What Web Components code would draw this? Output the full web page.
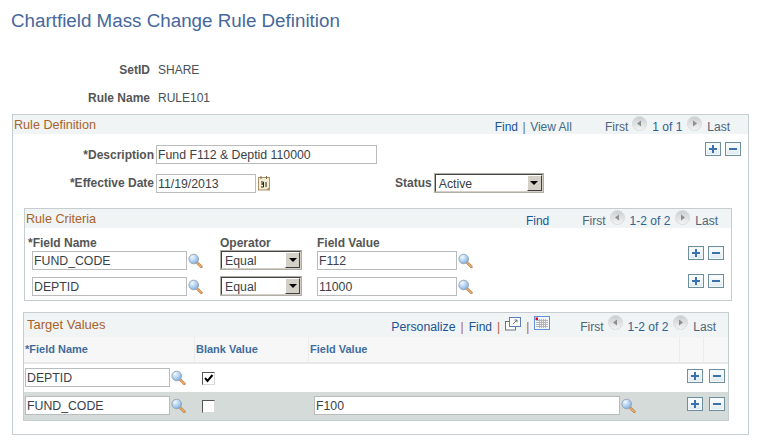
<!DOCTYPE html>
<html><head><meta charset="utf-8"><title>Chartfield Mass Change Rule Definition</title>
<style>
html,body{margin:0;padding:0;background:#fff;font:12px "Liberation Sans",Arial,sans-serif;color:#3d3d3d;}
</style></head><body>
<template id="g-lookup"><svg width="15" height="15" viewBox="0 0 15 15"><defs><radialGradient id="l" cx=".35" cy=".3" r=".8"><stop offset="0" stop-color="#f2f8fd"/><stop offset=".6" stop-color="#a9cbee"/><stop offset="1" stop-color="#6f9fd6"/></radialGradient></defs><path d="M9 9.500 L13.300 13.700" stroke="#b08a60" stroke-width="2.800" stroke-linecap="round"/><path d="M9.400 10 L13.200 13.600" stroke="#f2a860" stroke-width="1.500" stroke-linecap="round"/><circle cx="5.700" cy="6" r="4.800" fill="url(#l)" stroke="#9aa9b8" stroke-width="1"/></svg></template>

<x-page>
  <x-meta label="SetID">SHARE</x-meta>
  <x-meta label="Rule Name">RULE101</x-meta>
  <x-panel title="Rule Definition" class="outer" style="--hr:18px">
    <x-nav slot="tools" find="view" range="1 of 1" gap="33"></x-nav>
    <x-rule-def></x-rule-def>
  </x-panel>
</x-page>

<script>
const def=(n,html,init)=>customElements.define(n,class extends HTMLElement{
  constructor(){super();this.attachShadow({mode:'open'}).innerHTML=typeof html==='function'?html(this):html;}
  connectedCallback(){ if(typeof html==='function'&&!this._d){this._d=1;this.shadowRoot.innerHTML=html(this);} if(init)init(this);}
});
const lookup=()=>document.getElementById('g-lookup').innerHTML;

def('x-lookup',()=>`<style>:host{display:inline-flex;width:15px;height:15px}svg{display:block}</style>${lookup()}`);

def('x-input',`<style>:host{display:block;box-sizing:border-box;height:19px;border:1px solid #b8bcbc;background:#fff;padding:0 1px;font:12.3px/18px "Liberation Sans",Arial,sans-serif;color:#3a3f48;white-space:nowrap;overflow:hidden}</style><slot></slot>`);

def('x-select',`<style>:host{display:flex;box-sizing:border-box;height:20px;border:2px solid;border-color:#444 #d4d0c8 #d4d0c8 #444;background:#fff;padding-left:3px;align-items:center;justify-content:space-between;font:12.3px "Liberation Sans",Arial,sans-serif;color:#3a3f48;outline:1px solid #b0aea6;outline-offset:-1px}
.t{padding-top:2px}
.b{width:15px;height:16px;box-sizing:border-box;background:#d4d0c8;border:1px solid;border-color:#fff #404040 #404040 #fff;display:flex;align-items:center;justify-content:center;flex:none}
.b i{width:0;height:0;border:4px solid transparent;border-top:4px solid #000;border-bottom:0}</style><span class="t"><slot></slot></span><span class="b"><i></i></span>`);

def('x-addrem',`<style>:host{display:flex;gap:var(--ag,4px)}
b{display:block;width:16px;height:14px;box-sizing:border-box;border:1px solid #6f8f9f;box-shadow:inset 0 0 0 1px #f2f7fa;background:linear-gradient(#fff,#dfe9ef);position:relative}
b::before{content:"";position:absolute;left:3px;right:3px;top:5px;height:2px;background:#3a72ae}
b.p::after{content:"";position:absolute;top:2px;bottom:2px;left:6px;width:2px;background:#3a72ae}</style><b class="p"></b><b></b>`);

def('x-round',el=>{const d=el.getAttribute('dir')==='r';return `<style>:host{display:inline-block;width:15px;height:15px;position:relative;top:-4px}svg{display:block}</style><svg width="15" height="15" viewBox="0 0 15 15"><defs><linearGradient id="g" x1="0" y1="0" x2="0" y2="1"><stop offset="0" stop-color="#c9cdcd"/><stop offset="1" stop-color="#f5f6f6"/></linearGradient></defs><circle cx="7.500" cy="7.500" r="7" fill="url(#g)" stroke="#d9dcdc"/><path d="${d?'M6 4.500 L10 7.500 L6 10.500Z':'M9 4.500 L5 7.500 L9 10.500Z'}" fill="#8a8f8f"/></svg>`});

def('x-nav',el=>{
 const f=el.getAttribute('find');const r=el.getAttribute('range');
 let left='';
 if(f==='view')left=`<a>Find</a> <span class="s">|</span> <span class="v">View All</span>`;
 if(f==='find')left=`<a>Find</a>`;
 if(f==='full')left=`<a style="font-size:12.300px">Personalize</a> <span class="r">|</span> <a>Find</a> <span class="r2">|</span> <svg class="ic" width="16" height="14" viewBox="0 0 16 14"><rect x=".5" y="4.500" width="10" height="8.500" fill="#fff" stroke="#6f7478"/><rect x="4.500" y=".5" width="11" height="9" fill="#fff" stroke="#5a7fb8"/><path d="M8 7 L12 3 M9.500 3 H12 V5.500" fill="none" stroke="#6f7478"/></svg> <span class="r">|</span> <svg class="ic g2" width="16" height="14" viewBox="0 0 16 14"><rect x=".5" y=".5" width="15" height="13" fill="#f4f6f9" stroke="#5f90d8"/><path d="M2 4.500h12M2 6.500h12M2 8.500h12M2 10.500h12M5.500 3v9M7.500 3v9M9.500 3v9M11.500 3v9" stroke="#b4b4b4" stroke-width="1"/><rect x="1.500" y="1.500" width="2.500" height="2.500" fill="#e8001c"/></svg>`;
 return `<style>:host{display:flex;align-items:center;padding-top:var(--nt,5px);font:12px "Liberation Sans",Arial,sans-serif;color:#4e6478;white-space:nowrap}
 a{color:#1a5596}.s{color:#5a6f80}.v{color:#3f6a8c}.r,.r2{color:#b0603a}.ic{position:relative;top:-3px}.g2{top:-4px}
 .left{display:flex;align-items:center;gap:${f==='full'?5:4.5}px}.m{color:#2f6295;margin:0 5px}.first{margin-left:${el.getAttribute('gap')||32}px;margin-right:4px}.last{margin-left:5px}</style>
 <span class="left">${left}</span><span class="first">First</span><x-round></x-round><span class="m">${r}</span><x-round dir="r"></x-round><span class="last">Last</span>`;
});

def('x-panel',el=>`<style>:host{display:block;box-sizing:border-box;border:1px solid #c5cdd0;background:#fff}
 header{display:flex;align-items:center;justify-content:space-between;height:var(--hh,19px);background:#f0f4f4;padding:0 var(--hr,17px) 0 var(--hl,1px);font:var(--hf,12.6px) "Liberation Sans",Arial,sans-serif;color:#a9622a}
 .tt{padding-bottom:var(--hb,0)}</style>
 <header><span class="tt">${el.getAttribute('title')}</span><slot name="tools"></slot></header><slot></slot>`);

def('x-meta',el=>`<style>:host{display:flex;height:28px;align-items:center;font:12px "Liberation Sans",Arial,sans-serif}
 b{width:150px;text-align:right;color:#555;margin-right:8px}span{color:#4a4f58}</style><b>${el.getAttribute('label')}</b><span><slot></slot></span>`);

def('x-page',`<style>:host{display:block;width:762px}
 h1{margin:0;height:56px;box-sizing:border-box;padding:10px 0 0 11px;font:18.8px/21px "Liberation Sans",Arial,sans-serif;color:#46689a}
 ::slotted(x-panel){margin:2px 13px 0 12px}</style><h1>Chartfield Mass Change Rule Definition</h1><slot></slot>`);

def('x-criteria',()=>`<style>:host{display:block;padding:8px 7px 4px 7px;font:12px "Liberation Sans",Arial,sans-serif}
 .grid{display:grid;grid-template-columns:155px 16px 100px 14px 140px 16px 1fr;row-gap:6px;align-items:center}
 .h{font-weight:bold;color:#555;height:14px;line-height:14px;margin-bottom:-6px}
 x-lookup{margin-left:1px}
 x-select{margin-left:17px;width:82px}
 x-addrem{justify-self:end;position:relative;top:-7px}
 x-addrem.second{top:-5px}</style>
 <div class="grid">
 <div class="h" style="margin-left:-4px">*Field Name</div><div></div><div class="h" style="margin-left:17px">Operator</div><div></div><div class="h">Field Value</div><div></div><div></div>
 ${[['FUND_CODE','Equal','F112',''],['DEPTID','Equal','11000','second']].map(r=>`<x-input>${r[0]}</x-input><x-lookup></x-lookup><x-select>${r[1]}</x-select><div></div><x-input>${r[2]}</x-input><x-lookup></x-lookup><x-addrem class="${r[3]}"></x-addrem>`).join('')}
 </div>`);

def('x-check',el=>`<style>:host{display:block;width:13px;height:13px;box-sizing:border-box;border:1px solid;border-color:#555 #d8d8d8 #d8d8d8 #555;background:#fff;margin-top:4px}svg{display:block}</style>${el.hasAttribute('checked')?'<svg width="11" height="11" viewBox="0 0 11 11"><path d="M2 5 L4.500 8 L9.500 2" fill="none" stroke="#000" stroke-width="2"/></svg>':''}`);

def('x-target',()=>`<style>:host{display:block;font:12px "Liberation Sans",Arial,sans-serif;--ag:6px}
 .g{display:grid;grid-template-columns:171px 114px 371px 24px 1fr}
 .h{height:25px;background:#f7f7f7;border-right:1px solid #ececec;border-bottom:2px solid #e8e8e8;font:bold 11px/25px "Liberation Sans",Arial,sans-serif;color:#3f6c9e;padding-left:1px}
 .c{height:28px;box-sizing:border-box;padding-top:4px;display:flex;align-items:flex-start}
 .alt{background:#d4dbd9}
 .c x-lookup{margin-left:1px;margin-top:2px}
 .add{grid-column:4/6;justify-content:flex-end;padding-right:3px;padding-top:5px}
 </style><div class="g">
 <div class="h">*Field Name</div><div class="h">Blank Value</div><div class="h">Field Value</div><div class="h"></div><div class="h" style="border-right:0"></div>
 <div class="c" style="padding-left:1px"><x-input style="width:145px">DEPTID</x-input><x-lookup></x-lookup></div><div class="c" style="padding-left:7px"><x-check checked></x-check></div><div class="c"></div><div class="c add"><x-addrem></x-addrem></div>
 <div class="c alt" style="padding-left:1px"><x-input style="width:145px">FUND_CODE</x-input><x-lookup></x-lookup></div><div class="c alt" style="padding-left:7px"><x-check></x-check></div><div class="c alt" style="padding-left:5px"><x-input style="width:306px">F100</x-input><x-lookup></x-lookup></div><div class="c alt add"><x-addrem></x-addrem></div>
 </div>`);

def('x-rule-def',()=>`<style>:host{display:block;padding:0 0 13px 10px;font:12px "Liberation Sans",Arial,sans-serif}
 .r{display:flex;align-items:center}
 label{font-weight:bold;color:#555;text-align:right;width:131px;margin-right:2px}
 .r1{margin-top:11px}
 .r1 x-addrem{margin-left:328px;margin-top:-11px}
 .r2{margin-top:9px;margin-bottom:15px}
 .crit{margin:0 16px 0 1px;--hr:13px}
 .tgt{margin:11px 19px 0 0;--hh:24px;--hl:3px;--hr:12px;--hf:13px;--nt:3px;--hb:2px}
 .cal{margin-left:2px;display:block}
 </style>
 <div class="r r1"><label>*Description</label><x-input style="width:221px">Fund F112 &amp; Deptid 110000</x-input><x-addrem></x-addrem></div>
 <div class="r r2"><label>*Effective Date</label><x-input style="width:100px">11/19/2013</x-input>
 <svg class="cal" width="12" height="15" viewBox="0 0 12 15"><rect x=".5" y="1.500" width="11" height="12.500" fill="#f4ecd0" stroke="#a89468"/><path d="M3 0v3M8.500 0v3" stroke="#7a6a48"/><path d="M3 6h2.500v2h-2v0h2v3h-2.500M8 6v5" fill="none" stroke="#222" stroke-width="1"/><path d="M8 14l3.500-3v3z" fill="#a89468"/></svg>
 <label style="width:auto;margin-left:125px">Status</label><x-select style="width:110px">Active</x-select></div>
 <x-panel class="crit" title="Rule Criteria"><x-nav slot="tools" find="find" range="1-2 of 2" gap="33"></x-nav><x-criteria></x-criteria></x-panel>
 <x-panel class="tgt" title="Target Values"><x-nav slot="tools" find="full" range="1-2 of 2" gap="30"></x-nav><x-target></x-target></x-panel>`);
</script>
</body></html>
